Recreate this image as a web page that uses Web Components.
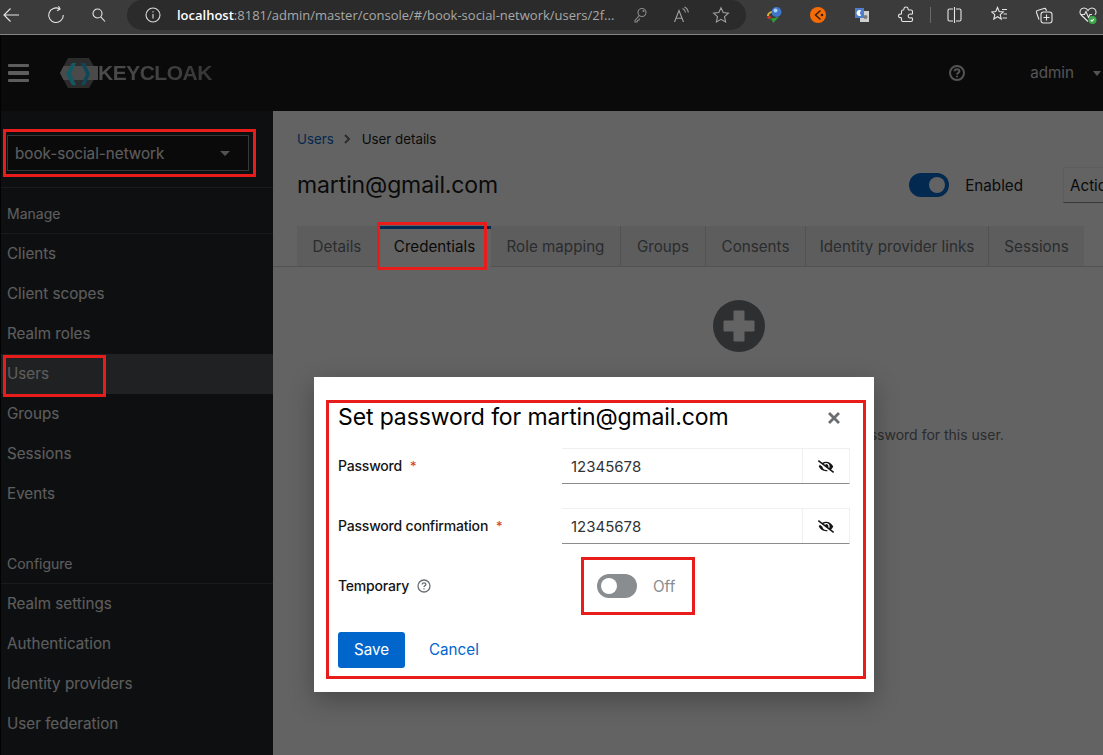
<!DOCTYPE html>
<html lang="en">
<head>
<meta charset="utf-8">
<title>Keycloak - Set password</title>
<style>
  html, body { margin: 0; height: 100%; overflow: hidden; background: #000; }
  body { font-family: Inter, "Noto Sans", sans-serif; font-size: 15.2px; }
</style>
</head>
<body>
<kc-browser-bar></kc-browser-bar>
<kc-console>
  <kc-header slot="header"></kc-header>
  <kc-sidebar slot="sidebar">
    <kc-realm-select>book-social-network</kc-realm-select>
    <kc-nav-heading>Manage</kc-nav-heading>
    <kc-nav-item>Clients</kc-nav-item>
    <kc-nav-item>Client scopes</kc-nav-item>
    <kc-nav-item>Realm roles</kc-nav-item>
    <kc-nav-item active>Users</kc-nav-item>
    <kc-nav-item>Groups</kc-nav-item>
    <kc-nav-item>Sessions</kc-nav-item>
    <kc-nav-item>Events</kc-nav-item>
    <kc-nav-heading second>Configure</kc-nav-heading>
    <kc-nav-item>Realm settings</kc-nav-item>
    <kc-nav-item>Authentication</kc-nav-item>
    <kc-nav-item>Identity providers</kc-nav-item>
    <kc-nav-item>User federation</kc-nav-item>
  </kc-sidebar>
  <kc-user-page slot="main"></kc-user-page>
</kc-console>
<kc-backdrop>
  <kc-modal heading="Set password for martin@gmail.com">
    <kc-field label="Password" required><kc-password value="12345678"></kc-password></kc-field>
    <kc-field label="Password confirmation" required><kc-password value="12345678"></kc-password></kc-field>
    <kc-field label="Temporary" help><kc-toggle label="Off"></kc-toggle></kc-field>
  </kc-modal>
</kc-backdrop>
<!-- red marks drawn over the screenshot -->
<kc-mark x="3" y="129" w="253" h="48"></kc-mark>
<kc-mark x="3" y="355" w="103" h="42"></kc-mark>
<kc-mark x="377" y="222" w="110" h="48"></kc-mark>
<kc-mark x="326" y="400" w="540" h="279"></kc-mark>
<kc-mark x="581" y="557" w="114" h="58"></kc-mark>

<script>
const define = (name, cls) => {
    if (customElements.get(name) === undefined) {
        customElements.define(name, cls);
    }
};

class ShadowEl extends HTMLElement {
    constructor() {
        super();
        this.attachShadow({ mode: "open" });
    }
    connectedCallback() {
        this.render();
    }
}

class KcBrowserBar extends ShadowEl {
    render() {
        this.shadowRoot.innerHTML = `
            <style>
                :host { display: flex; align-items: flex-start; height: 34px; background: #3b3b3b; border-bottom: 1px solid #858585; position: relative; }
                svg { flex: none; display: block; fill: none; stroke: #e6e6e6; stroke-width: 1.1; }
                .back { margin: 6px 0 0 2px; }
                .reload { margin: 6px 0 0 27px; }
                .search { margin: 7px 0 0 25px; }
                .pill { flex: none; width: 619px; height: 30px; margin-left: 21px; box-sizing: border-box; background: #2b2b2b; border-radius: 15px; display: flex; align-items: center; padding-left: 18px; }
                .pill svg { stroke: #dadada; }
                .url { flex: none; margin-left: 16px; font: 13px "Open Sans", sans-serif; color: #a8a8a8; white-space: nowrap; width: 443px; }
                .url b { font-weight: 600; color: #fff; }
                .pill .key { margin-left: 11px; stroke: #8c8c8c; }
                .pill .read { margin-left: 22px; stroke: #a0a0a0; }
                .pill .star { margin-left: 21px; stroke: #a0a0a0; }
                .ext { position: absolute; top: 6px; }
                .sep { position: absolute; left: 930px; top: 7px; width: 1px; height: 16px; background: #6a6a6a; }
            </style>
            <svg class="back" width="18" height="18" viewBox="0 0 18 18"><path d="M17 9H2M8.500 2.500L2 9l6.500 6.500"/></svg>
            <svg class="reload" width="18" height="18" viewBox="0 0 18 18"><path d="M12.500 2.800A7.300 7.300 0 1 0 16.300 9"/><path d="M11.500 .3l1.600 2.800-3 1.600"/></svg>
            <svg class="search" width="16" height="16" viewBox="0 0 16 16"><circle cx="7.500" cy="6.500" r="4.500"/><path d="M10.800 9.800L15 14.500"/></svg>
            <div class="pill">
                <svg width="16" height="16" viewBox="0 0 16 16"><circle cx="8" cy="8" r="7"/><path d="M8 7v4.500M8 4.200v1.400"/></svg>
                <span class="url"><b>localhost</b>:8181/admin/master/console/#/book-social-network/users/2f...</span>
                <svg class="key" width="18" height="18" viewBox="0 0 18 18"><circle cx="11" cy="6.500" r="4"/><path d="M8.300 9.500L4 14.500v1.500h2l.5-1.500 1.500-.5.500-1.500"/><circle cx="12.500" cy="5" r=".5"/></svg>
                <svg class="read" width="20" height="18" viewBox="0 0 20 18"><path d="M3.500 16L8 4.500 12.500 16M5 12.300h6"/><path d="M11.500 2.500c1.800.7 2.800 2.200 3 4M13.500 1c2.300 1 3.500 3 3.800 5.500"/></svg>
                <svg class="star" width="18" height="18" viewBox="0 0 18 18"><path d="M9 1.800l2.200 4.800 5.200.6-3.900 3.500 1.100 5.200L9 13.300l-4.600 2.600 1.100-5.200L1.600 7.200l5.200-.6z"/></svg>
            </div>
            <svg class="ext" style="left:766px;stroke:none" width="17" height="18" viewBox="0 0 17 18"><path d="M1 10c0-3 3-5 6-5l-1 2c-2 0-3 1-3 3z" fill="#d9b23a"/><path d="M1 12c0-1 1-2 2-2l3 1-3 2z" fill="#d8332a"/><path d="M3 13l10-2-6 6-1-3z" fill="#2f9e33"/><circle cx="10.500" cy="6" r="5" fill="#3f76c9"/><circle cx="9.500" cy="4.600" r="2" fill="#a9d3f2"/></svg>
            <svg class="ext" style="left:810px;top:7px;stroke:none" width="16" height="16" viewBox="0 0 16 16"><circle cx="8" cy="8" r="8" fill="#f76b05"/><path d="M10.500 3.500L5.500 8l5 4.500" stroke="#2e2418" stroke-width="1.500" fill="none"/><circle cx="12" cy="8" r="1.300" fill="#2e2418"/></svg>
            <svg class="ext" style="left:855px;top:8px;stroke:none" width="14" height="15" viewBox="0 0 14 15"><rect x="5" y="3" width="9" height="11" fill="#cfcfcf"/><rect width="9" height="10" fill="#4f7fc9"/><path d="M6.200 2.500A3 3 0 1 0 6.200 7.500 3.500 3.500 0 0 1 6.200 2.500z" fill="#fff"/><circle cx="10.500" cy="9" r="2" fill="#7a7a7a"/></svg>
            <svg class="ext" style="left:898px" width="16" height="18" viewBox="0 0 16 18"><path d="M6 2.500c0-2 4-2 4 0 0 1 0 1.500.6 1.500h2.400c1 0 1.500.5 1.500 1.500v2c0 .6-.6.800-1.300.6-1.700-.5-3 .6-3 1.900s1.300 2.400 3 1.900c.7-.2 1.300 0 1.300.6v1.500c0 1-.5 1.500-1.500 1.500H5c-1 0-1.500-.5-1.500-1.500v-1.700c0-.5-.5-.8-1.100-.7-2.500.4-2.500-3.800 0-3.400.6.100 1.100-.2 1.100-.7V5.500C3.500 4.500 4 4 5 4h.4c.4 0 .6-.8.6-1.500z"/></svg>
            <div class="sep"></div>
            <svg class="ext" style="left:947px" width="15" height="18" viewBox="0 0 15 18"><path d="M6 3H2.500C1.500 3 1 3.500 1 4.500v9c0 1 .5 1.500 1.500 1.500H6M9 3h3.500c1 0 1.500.5 1.500 1.500v9c0 1-.5 1.500-1.500 1.500H9M7.500 1v16"/></svg>
            <svg class="ext" style="left:991px" width="17" height="18" viewBox="0 0 17 18"><path d="M6.500 1.500l1.700 4 4.100.4-3.100 2.800 1 4.300-3.700-2.300-3.700 2.300 1-4.300L.7 5.900l4.100-.4z"/><path d="M11 3.500h5M12.500 8H16M11.500 12H16"/></svg>
            <svg class="ext" style="left:1035px" width="18" height="19" viewBox="0 0 18 19"><path d="M4 13.500L1.500 6.500c-.3-1 .2-1.800 1-2L9 2.500c1-.3 1.700.2 2 1l.5 1.500"/><rect x="6" y="6" width="11" height="11" rx="2.500"/><path d="M11.500 8.500v6M8.500 11.500h6"/></svg>
            <svg class="ext" style="left:1079px;overflow:visible" width="18" height="18" viewBox="0 0 18 18"><path d="M9 15.500L2.200 9C-.5 6 1.500 2 5 2c2 0 3.200 1 4 2.500C9.800 3 11 2 13 2c3.500 0 5.500 4 2.800 7"/><path d="M1.500 8.500h4l1.500-3 2.500 6 1.500-3h2"/><circle cx="13.500" cy="14" r="4" fill="#3fa84a" stroke="none"/><path d="M11.800 14l1.200 1.200 2-2.200" stroke="#fff"/></svg>
        `;
    }
}

class KcConsole extends ShadowEl {
    render() {
        this.shadowRoot.innerHTML = `
            <style>
                :host { display: grid; grid-template-columns: 272px 1fr; grid-template-rows: 76px 1fr; height: 720px; padding-left: 1px; background: #000; overflow: hidden; }
                ::slotted([slot=header]) { grid-column: 1 / 3; }
            </style>
            <slot name="header"></slot>
            <slot name="sidebar"></slot>
            <slot name="main"></slot>
        `;
    }
}

class KcHeader extends ShadowEl {
    render() {
        this.shadowRoot.innerHTML = `
            <style>
                :host { display: flex; align-items: center; background: #151515; color: #d8d8d8; padding: 0 0 0 7px; position: relative; }
                .burger { width: 21px; display: flex; flex-direction: column; gap: 4px; }
                .burger i { display: block; height: 3.500px; background: #f0f0f0; border-radius: 1px; }
                .logo { display: block; margin-left: 31px; }
                .word { font: 700 21px "Liberation Sans", sans-serif; letter-spacing: -.5px; background: linear-gradient(90deg, #c4c4c4, #8a8a8a); -webkit-background-clip: text; background-clip: text; color: transparent; }
                .help { margin-left: auto; margin-right: 65px; display: block; }
                .user { font-size: 15.200px; margin: -2px 19px 0 0; }
                .caret { width: 0; height: 0; border: 4.500px solid transparent; border-top: 5px solid #d8d8d8; border-bottom: 0; margin-right: 2px; }
            </style>
            <div class="burger"><i></i><i></i><i></i></div>
            <svg class="logo" width="38" height="30" viewBox="0 0 38 30">
                <path d="M0 15L8 0h21l9 15-9 15H8z" fill="#6e6e6e"/>
                <path d="M3.500 8H38v14H3.500L0 15z" fill="#bebebe"/>
                <path d="M12 5h4l-5 11 5 11h-4L6 16z" fill="#2fe5ff"/>
                <path d="M21 5h4l5 11-5 11h-4l5-11z" fill="#22b3e2"/>
            </svg>
            <span class="word">KEYCLOAK</span>
            <svg class="help" width="16" height="16" viewBox="0 0 16 16" fill="none" stroke="#d8d8d8" stroke-width="2"><circle cx="8" cy="8" r="7"/><path d="M5.600 6.300C5.700 4.900 6.800 4.300 8 4.300c1.400 0 2.400.8 2.400 1.900 0 1.700-2.400 1.500-2.400 3.200"/><path d="M8 10.800v1.400"/></svg>
            <span class="user">admin</span>
            <span class="caret"></span>
        `;
    }
}

class KcSidebar extends ShadowEl {
    render() {
        this.shadowRoot.innerHTML = `
            <style>
                :host { display: block; background: #212427; color: #f0f0f0; overflow: hidden; }
            </style>
            <slot></slot>
        `;
    }
}

class KcRealmSelect extends ShadowEl {
    render() {
        this.shadowRoot.innerHTML = `
            <style>
                :host { display: block; padding: 24px 24px 16px 6px; border-bottom: 1px solid #3c3f42; }
                .box { height: 36px; box-sizing: border-box; border: 1px solid #8a8d90; background: #151515; display: flex; align-items: center; justify-content: space-between; padding: 0 18px 0 7px; }
                .caret { border: 5px solid transparent; border-top: 5px solid #d2d2d2; border-bottom: 0; }
            </style>
            <div class="box"><span><slot></slot></span><span class="caret"></span></div>
        `;
    }
}

class KcNavHeading extends ShadowEl {
    render() {
        const second = this.hasAttribute("second");
        this.shadowRoot.innerHTML = `
            <style>
                :host { display: flex; align-items: flex-end; height: 46px; margin-top: ${second ? "24px" : "0"}; padding: 0 0 11px 6px; border-bottom: 1px solid #3c3f42; font-size: 14px; box-sizing: border-box; }
            </style>
            <slot></slot>
        `;
    }
}

class KcNavItem extends ShadowEl {
    render() {
        const active = this.hasAttribute("active");
        this.shadowRoot.innerHTML = `
            <style>
                :host { display: flex; align-items: center; height: 40px; padding: 0 0 2px 6px; box-sizing: border-box; background: ${active ? "#4f5255" : "transparent"}; }
            </style>
            <slot></slot>
        `;
    }
}

class KcTabs extends ShadowEl {
    render() {
        const names = (this.getAttribute("names") || "").split("|");
        const current = this.getAttribute("current");
        const tabs = names.map(n => `<div class="tab ${n === current ? "on" : ""}">${n}</div>`).join("");
        this.shadowRoot.innerHTML = `
            <style>
                :host { display: flex; height: 41px; box-sizing: border-box; border-bottom: 1px solid #d2d2d2; padding-left: 24px; }
                .tab { flex: none; height: 40px; box-sizing: border-box; display: flex; align-items: center; justify-content: center; white-space: nowrap; background: #f0f0f0; color: #6a6e73; border-right: 1px solid #d2d2d2; }
                .tab:nth-of-type(1) { width: 81px; }
                .tab:nth-of-type(2) { width: 113px; }
                .tab:nth-of-type(3) { width: 130px; }
                .tab:nth-of-type(4) { width: 85px; }
                .tab:nth-of-type(5) { width: 100px; }
                .tab:nth-of-type(6) { width: 183px; }
                .tab:nth-of-type(7) { width: 95px; border-right: 0; }
                .tab.on { background: #fff; color: #151515; border-top: 3px solid #06c; padding-bottom: 3px; height: 41px; border-right: 0; }
            </style>
            ${tabs}
        `;
    }
}

class KcUserPage extends ShadowEl {
    render() {
        this.shadowRoot.innerHTML = `
            <style>
                :host { display: block; background: #fff; color: #151515; overflow: hidden; }
                .inner { width: 932px; }
                .crumbs { display: flex; align-items: center; height: 20px; padding: 18px 24px 0; font-size: 13.300px; }
                .crumbs a { color: #06c; }
                .crumbs svg { margin: 0 11px 0 9px; display: block; }
                .title { display: flex; align-items: center; height: 36px; padding: 18px 24px 0; }
                h1 { margin: 0; font-size: 23px; letter-spacing: -.12px; font-weight: 400; flex: 1; }
                .enabled { margin-right: 40px; }
                .action { width: 118px; height: 36px; box-sizing: border-box; border: 1px solid #f0f0f0; border-bottom-color: #8a8d90; padding-left: 6px; display: flex; align-items: center; }
                kc-tabs { margin-top: 23px; }
                .empty { display: flex; flex-direction: column; align-items: center; padding-top: 33px; color: #6a6e73; }
                .empty svg { display: block; }
                .empty p { margin: 74px 0 0; padding-left: 15px; white-space: nowrap; font-size: 14px; }
            </style>
            <div class="inner">
                <div class="crumbs"><a>Users</a><svg width="8" height="12" viewBox="0 0 8 12" fill="none" stroke="#6a6e73" stroke-width="2"><path d="M2 2l4 4-4 4"/></svg><span>User details</span></div>
                <div class="title">
                    <h1>martin@gmail.com</h1>
                    <kc-toggle class="enabled" label="Enabled" checked></kc-toggle>
                    <div class="action">Action</div>
                </div>
                <kc-tabs current="Credentials" names="Details|Credentials|Role mapping|Groups|Consents|Identity provider links|Sessions"></kc-tabs>
                <div class="empty">
                    <svg width="52" height="52" viewBox="0 0 52 52"><circle cx="26" cy="26" r="26" fill="#72767b"/><path d="M21.500 10.500h9a1 1 0 0 1 1 1v9h9a1 1 0 0 1 1 1v9a1 1 0 0 1-1 1h-9v9a1 1 0 0 1-1 1h-9a1 1 0 0 1-1-1v-9h-9a1 1 0 0 1-1-1v-9a1 1 0 0 1 1-1h9v-9a1 1 0 0 1 1-1z" fill="#fff"/></svg>
                    <p>This user does not have any credentials. You can set a password for this user.</p>
                </div>
            </div>
        `;
    }
}

class KcBackdrop extends ShadowEl {
    render() {
        this.shadowRoot.innerHTML = `
            <style>
                :host { position: absolute; left: 0; top: 35px; right: 0; bottom: 0; background: rgba(3, 3, 3, .62); display: block; padding: 342px 0 0 314px; box-sizing: border-box; }
            </style>
            <slot></slot>
        `;
    }
}

class KcModal extends ShadowEl {
    render() {
        this.shadowRoot.innerHTML = `
            <style>
                :host { display: block; width: 560px; height: 315px; box-sizing: border-box; padding: 24px; background: #fff; color: #151515; box-shadow: 0 8px 24px rgba(3, 3, 3, .28); }
                header { display: flex; align-items: center; justify-content: space-between; height: 31px; margin-bottom: 16px; }
                h2 { margin: 0; font-size: 23px; letter-spacing: -.12px; font-weight: 400; color: #000; }
                header svg { display: block; margin: 3px 10px 0 0; }
                .rows { display: grid; row-gap: 24px; }
                .foot { display: flex; align-items: center; margin-top: 28px; }
                .save { width: 67px; height: 36px; box-sizing: border-box; padding-bottom: 2px; border-radius: 3px; background: #06c; color: #fff; display: flex; align-items: center; justify-content: center; }
                .cancel { margin: -2px 0 0 24px; color: #06c; }
            </style>
            <header>
                <h2>${this.getAttribute("heading")}</h2>
                <svg width="12" height="12" viewBox="0 0 12 12" stroke="#6a6e73" stroke-width="2.800" fill="none"><path d="M1 1l10 10M11 1L1 11"/></svg>
            </header>
            <div class="rows"><slot></slot></div>
            <div class="foot"><div class="save">Save</div><div class="cancel">Cancel</div></div>
        `;
    }
}

class KcField extends ShadowEl {
    render() {
        const req = this.hasAttribute("required") ? `<span class="req">*</span>` : "";
        const help = this.hasAttribute("help")
            ? `<svg width="14" height="14" viewBox="0 0 14 14" fill="none" stroke="#6a6e73" stroke-width="1.300"><circle cx="7" cy="7" r="6"/><path d="M5.100 5.500C5.200 4.400 6 3.900 7 3.900c1.100 0 1.900.6 1.900 1.500C8.900 6.700 7 6.600 7 8"/><path d="M7 9.200v1.200"/></svg>`
            : "";
        this.shadowRoot.innerHTML = `
            <style>
                :host { display: grid; grid-template-columns: 224px 288px; align-items: center; height: 36px; }
                .label { display: flex; align-items: center; margin-top: -1px; font-size: 14px; letter-spacing: -.2px; font-weight: 500; white-space: nowrap; }
                .req { color: #d8342a; margin-left: 8px; font-weight: 400; font-size: 13px; }
                svg { margin-left: 8px; display: block; }
            </style>
            <div class="label">${this.getAttribute("label")}${req}${help}</div>
            <slot></slot>
        `;
    }
}

class KcPassword extends ShadowEl {
    render() {
        this.shadowRoot.innerHTML = `
            <style>
                :host { display: flex; height: 36px; box-sizing: border-box; border: 1px solid #f0f0f0; border-bottom-color: #8a8d90; border-left: 0; }
                .val { flex: 1; display: flex; align-items: center; padding-left: 9px; border-right: 1px solid #f0f0f0; font-size: 15px; color: #333; }
                .eye { width: 46px; display: flex; align-items: center; justify-content: center; }
                svg { display: block; }
            </style>
            <div class="val">${this.getAttribute("value")}</div>
            <div class="eye"><svg width="16" height="13" viewBox="0 0 640 512" fill="#151515"><path d="M320 400c-75.850 0-137.250-58.710-142.900-133.110L72.200 185.820c-13.790 17.300-26.480 35.590-36.720 55.590a32.350 32.350 0 0 0 0 29.190C89.710 376.410 197.070 448 320 448c26.910 0 52.870-4 77.890-10.460L346 397.390a144.130 144.130 0 0 1-26 2.610zm313.820 58.100l-110.550-85.440a331.250 331.250 0 0 0 81.250-102.070 32.350 32.350 0 0 0 0-29.190C550.290 135.590 442.930 64 320 64a308.150 308.150 0 0 0-147.320 37.700L45.460 3.370A16 16 0 0 0 23 6.180L3.370 31.450A16 16 0 0 0 6.180 53.900l588.360 454.730a16 16 0 0 0 22.460-2.810l19.640-25.270a16 16 0 0 0-2.820-22.450zm-183.720-142l-39.300-30.380A94.750 94.750 0 0 0 416 256a94.760 94.760 0 0 0-121.310-92.210A47.650 47.650 0 0 1 304 192a46.640 46.640 0 0 1-1.540 10l-73.610-56.890A142.310 142.310 0 0 1 320 112a143.920 143.920 0 0 1 144 144c0 21.630-5.290 41.790-13.900 60.110z"/></svg></div>
        `;
    }
}

class KcToggle extends ShadowEl {
    render() {
        const on = this.hasAttribute("checked");
        this.shadowRoot.innerHTML = `
            <style>
                :host { display: flex; align-items: center; gap: 16px; ${on ? "" : "padding-left: 35px;"} color: ${on ? "#151515" : "#8a8d90"}; }
                .track { width: 40px; height: 24px; border-radius: 12px; background: ${on ? "#06c" : "#8a8d90"}; display: flex; align-items: center; padding: 0 4px; box-sizing: border-box; justify-content: ${on ? "flex-end" : "flex-start"}; }
                .knob { width: 16px; height: 16px; border-radius: 50%; background: #fff; }
            </style>
            <div class="track"><div class="knob"></div></div>
            <span>${this.getAttribute("label")}</span>
        `;
    }
}

class KcMark extends ShadowEl {
    render() {
        const a = n => this.getAttribute(n);
        this.shadowRoot.innerHTML = `
            <style>
                :host { position: absolute; left: ${a("x")}px; top: ${a("y")}px; width: ${a("w")}px; height: ${a("h")}px; box-sizing: border-box; border: 3px solid #e91c1c; pointer-events: none; }
            </style>
        `;
    }
}

define("kc-browser-bar", KcBrowserBar);
define("kc-console", KcConsole);
define("kc-header", KcHeader);
define("kc-sidebar", KcSidebar);
define("kc-realm-select", KcRealmSelect);
define("kc-nav-heading", KcNavHeading);
define("kc-nav-item", KcNavItem);
define("kc-tabs", KcTabs);
define("kc-user-page", KcUserPage);
define("kc-backdrop", KcBackdrop);
define("kc-modal", KcModal);
define("kc-field", KcField);
define("kc-password", KcPassword);
define("kc-toggle", KcToggle);
define("kc-mark", KcMark);
</script>
</body>
</html>
